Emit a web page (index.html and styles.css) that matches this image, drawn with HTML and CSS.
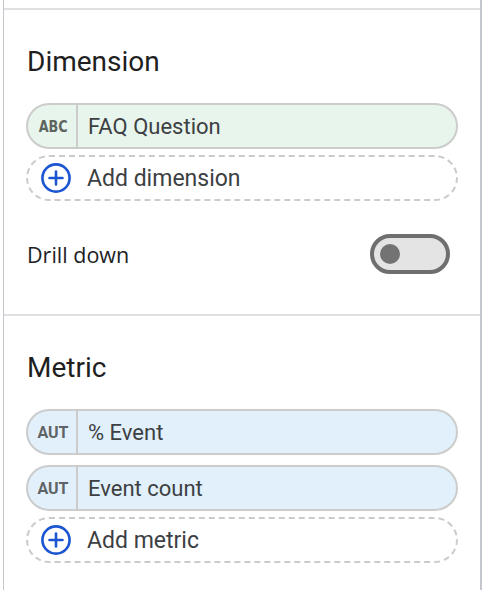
FILE: index.html
```html
<!DOCTYPE html>
<html lang="en">
<head>
  <meta charset="UTF-8" />
  <title>Chart setup</title>
  <link rel="stylesheet" href="styles.css">
</head>
<body>
  <div class="panel">
    <div class="top-strip"></div>

    <section class="block">
      <h2 class="block-title">Dimension</h2>
      <div class="fields">
        <div class="field dim">
          <span class="type"><span class="type-abc">ABC</span></span>
          <span class="field-name">FAQ Question</span>
        </div>
        <div class="add">
          <svg class="add-icon" viewBox="0 0 32 32" width="32" height="32">
            <circle cx="16" cy="16" r="13.6" fill="none" stroke="#1b55d1" stroke-width="2.6"/>
            <path d="M16 9.5v13M9.5 16h13" stroke="#1b55d1" stroke-width="2.6" stroke-linecap="round"/>
          </svg>
          <span class="add-label">Add dimension</span>
        </div>
      </div>
      <div class="drill">
        <span class="drill-label">Drill down</span>
        <div class="toggle"><span class="knob"></span></div>
      </div>
    </section>

    <section class="block">
      <h2 class="block-title">Metric</h2>
      <div class="fields">
        <div class="field met">
          <span class="type">AUT</span>
          <span class="field-name">% Event</span>
        </div>
        <div class="field met">
          <span class="type">AUT</span>
          <span class="field-name">Event count</span>
        </div>
        <div class="add">
          <svg class="add-icon" viewBox="0 0 32 32" width="32" height="32">
            <circle cx="16" cy="16" r="13.6" fill="none" stroke="#1b55d1" stroke-width="2.6"/>
            <path d="M16 9.5v13M9.5 16h13" stroke="#1b55d1" stroke-width="2.6" stroke-linecap="round"/>
          </svg>
          <span class="add-label">Add metric</span>
        </div>
      </div>
    </section>
  </div>
</body>
</html>
```

FILE: styles.css
```css
body {
  margin: 0;
  background: #fff;
  font-family: Roboto, "Liberation Sans", sans-serif;
  color: #202124;
}

.panel {
  margin-left: 3px;
  width: 476px;
  height: 590px;
  border-left: 1px solid #c4c7cd;
  border-right: 2px solid #c4c7cd;
  box-sizing: content-box;
}

.top-strip {
  height: 8px;
  border-bottom: 2px solid #dfe0e2;
}

.block {
  padding: 36px 22px 0 22px;
}

.block + .block {
  border-top: 2px solid #dfe0e2;
}

.block-title {
  margin: 0 0 25px 1px;
  font-size: 28px;
  line-height: 32px;
  font-weight: 400;
  color: #1f1f1f;
}

.fields {
  display: flex;
  flex-direction: column;
  gap: 6px;
}

.field + .field {
  margin-top: 4px;
}

.field {
  height: 46px;
  box-sizing: border-box;
  border: 2px solid #cbcccb;
  border-radius: 23px;
  display: flex;
  align-items: center;
}

.dim {
  background: #e8f5ec;
}

.met {
  background: #e1f0fb;
}

.type {
  flex: none;
  width: 50px;
  height: 100%;
  border-right: 2px solid #cbcccb;
  display: flex;
  align-items: center;
  justify-content: center;
  padding-left: 2px;
  box-sizing: border-box;
  font-size: 16px;
  font-weight: 700;
  color: #5f6368;
}

.type-abc {
  display: inline-block;
  font-family: "DejaVu Sans", sans-serif;
  font-size: 16px;
  transform: scaleX(0.8);
  color: #5d655f;
}

.field-name {
  padding-left: 10px;
  font-size: 22px;
  color: #3c4043;
}

.add {
  height: 46px;
  box-sizing: border-box;
  border: 2px dashed #cbcbcb;
  border-radius: 23px;
  display: flex;
  align-items: center;
  padding-left: 12px;
  gap: 15px;
}

.add-icon {
  display: block;
  flex: none;
}

.add-label {
  font-size: 23px;
  color: #3c4043;
}

.drill {
  margin-top: 33px;
  margin-right: 8px;
  padding-bottom: 40px;
  display: flex;
  align-items: center;
  justify-content: space-between;
}

.drill-label {
  padding-left: 1px;
  font-family: "Open Sans", sans-serif;
  font-size: 21.5px;
  color: #202124;
}

.toggle {
  width: 80px;
  height: 40px;
  box-sizing: border-box;
  border: 4px solid #6f6f6f;
  border-radius: 20px;
  background: #e4e4e4;
  display: flex;
  align-items: center;
  padding-left: 6px;
}

.knob {
  width: 20px;
  height: 20px;
  border-radius: 50%;
  background: #737373;
}
```
